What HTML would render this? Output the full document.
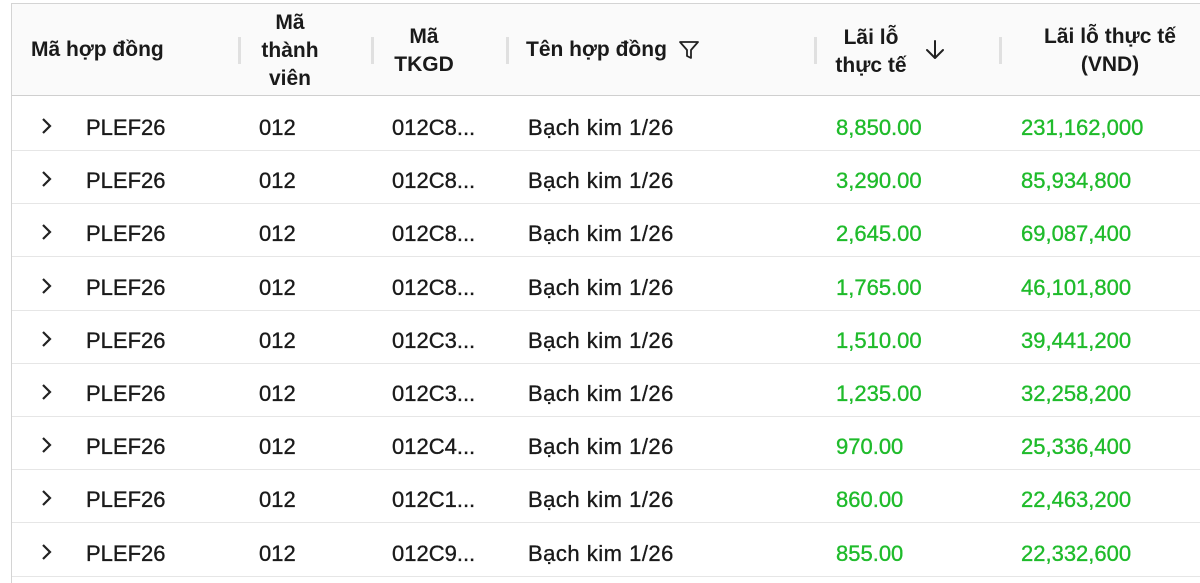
<!DOCTYPE html>
<html><head><meta charset="utf-8"><style>
*{margin:0;padding:0;box-sizing:border-box}
body{width:1200px;height:569px;overflow:hidden;background:#fff;font-family:"Liberation Sans","DejaVu Sans",sans-serif;color:#1a1a1a;position:relative}
.frame{position:absolute;left:11px;top:3px;width:1200px;height:580px;border-left:1px solid #d4d4d4;border-top:1px solid #d4d4d4}
.head{position:absolute;left:12px;top:4px;width:1188px;height:92px;background:#fafafa;border-bottom:1px solid #cfcfcf}
.h{position:absolute;font-weight:bold;font-size:21px;line-height:28px;color:#1a1a1a;text-align:center;white-space:nowrap}
.sep{position:absolute;top:37px;width:3px;height:27px;background:#e0e0e0}
.row{position:absolute;left:12px;width:1188px;height:53px;border-bottom:1px solid #e6e6e6}
.c{position:absolute;font-size:22px;top:3px;line-height:53px;white-space:nowrap;-webkit-text-stroke:0.35px currentColor}
.g{color:#1fbb2b}
.chev{position:absolute;top:19px;width:16px;height:18px}
</style></head><body>
<div class="frame"></div>
<div class="head"></div>
<div class="h" style="left:31px;top:36px;text-align:left">Mã hợp đồng</div>
<div class="sep" style="left:238px"></div>
<div class="h" style="left:250px;top:9px;width:80px">Mã<br>thành<br>viên</div>
<div class="sep" style="left:371px"></div>
<div class="h" style="left:384px;top:23px;width:80px">Mã<br>TKGD</div>
<div class="sep" style="left:506px"></div>
<div class="h" style="left:526px;top:36px;text-align:left">Tên hợp đồng</div>
<svg style="position:absolute;left:678px;top:39px" width="22" height="22" viewBox="0 0 22 22"><path d="M2 3H20L13 11V19L9 17V11Z" fill="none" stroke="#222" stroke-width="1.8" stroke-linejoin="round"/></svg>
<div class="sep" style="left:814px"></div>
<div class="h" style="left:826px;top:24px;width:90px">Lãi lỗ<br>thực tế</div>
<svg style="position:absolute;left:924px;top:38px" width="22" height="24" viewBox="0 0 22 24"><path d="M11 3V20M3 12L11 20L19 12" fill="none" stroke="#222" stroke-width="2" stroke-linecap="round" stroke-linejoin="round"/></svg>
<div class="sep" style="left:999px"></div>
<div class="h" style="left:1020px;top:23px;width:180px">Lãi lỗ thực tế<br>(VND)</div>

<div id="rows"></div>
<script>
var d=[["012C8...","8,850.00","231,162,000"],["012C8...","3,290.00","85,934,800"],["012C8...","2,645.00","69,087,400"],["012C8...","1,765.00","46,101,800"],["012C3...","1,510.00","39,441,200"],["012C3...","1,235.00","32,258,200"],["012C4...","970.00","25,336,400"],["012C1...","860.00","22,463,200"],["012C9...","855.00","22,332,600"]];
var h="";
d.forEach(function(r,i){var t=(98+i*53.2).toFixed(1);
h+='<div class="row" style="top:'+t+'px"><svg class="chev" viewBox="0 0 16 18" style="left:26px"><path d="M5 2L12 9L5 16" fill="none" stroke="#222" stroke-width="2.2"/></svg>'+
'<div class="c" style="left:74px">PLEF26</div><div class="c" style="left:247px">012</div><div class="c" style="left:380px">'+r[0]+'</div>'+
'<div class="c" style="left:516px;letter-spacing:0.5px">Bạch kim 1/26</div><div class="c g" style="left:824px">'+r[1]+'</div><div class="c g" style="left:1009px">'+r[2]+'</div></div>';});
document.getElementById("rows").innerHTML=h;
</script>
</body></html>
